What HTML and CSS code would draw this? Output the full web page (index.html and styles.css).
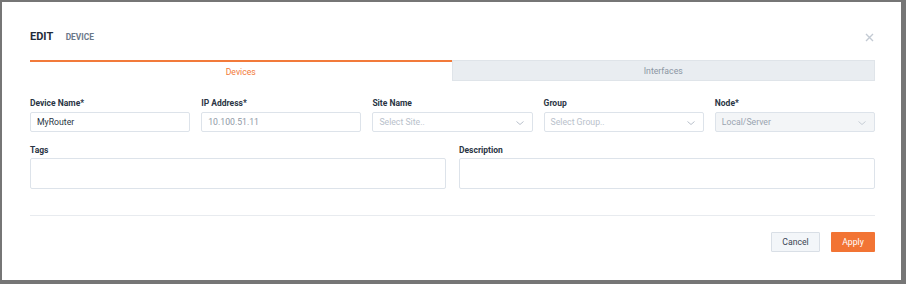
FILE: index.html
```html
<!DOCTYPE html>
<html lang="en">
<head>
<meta charset="UTF-8">
<meta name="viewport" content="width=device-width, initial-scale=1.0">
<title>Edit Device</title>
<link rel="stylesheet" href="styles.css">
</head>
<body>

<div class="modal">

<!-- Header -->
<div class="modal-header">
<div class="modal-title">EDIT <span class="modal-subtitle">DEVICE</span></div>
<div class="modal-close">
<svg width="9" height="9" viewBox="0 0 9 9"><path d="M1 1 L8 8 M8 1 L1 8" stroke="#c3cad3" stroke-width="1.4" fill="none"/></svg>
</div>
</div>

<!-- Tabs -->
<div class="tabs">
<div class="tab active">Devices</div>
<div class="tab">Interfaces</div>
</div>

<!-- Fields -->
<div class="field-row five">
<div class="field">
<label>Device Name*</label>
<div class="input">MyRouter</div>
</div>
<div class="field">
<label>IP Address*</label>
<div class="input readonly">10.100.51.11</div>
</div>
<div class="field">
<label>Site Name</label>
<div class="input select placeholder">Select Site..
<svg class="chevron" width="8" height="4" viewBox="0 0 8 4"><path d="M0.5 0.5 L4 3.5 L7.5 0.5" stroke="#b9c1cb" stroke-width="1" fill="none"/></svg>
</div>
</div>
<div class="field">
<label>Group</label>
<div class="input select placeholder">Select Group..
<svg class="chevron" width="8" height="4" viewBox="0 0 8 4"><path d="M0.5 0.5 L4 3.5 L7.5 0.5" stroke="#b9c1cb" stroke-width="1" fill="none"/></svg>
</div>
</div>
<div class="field">
<label>Node*</label>
<div class="input select disabled">Local/Server
<svg class="chevron" width="8" height="4" viewBox="0 0 8 4"><path d="M0.5 0.5 L4 3.5 L7.5 0.5" stroke="#c6cdd5" stroke-width="1" fill="none"/></svg>
</div>
</div>
</div>

<div class="field-row two">
<div class="field">
<label>Tags</label>
<div class="input tall"></div>
</div>
<div class="field">
<label>Description</label>
<div class="input tall"></div>
</div>
</div>

<div class="divider"></div>

<!-- Footer -->
<div class="modal-footer">
<button class="btn btn-cancel">Cancel</button>
<button class="btn btn-apply">Apply</button>
</div>

</div>

</body>
</html>
```

FILE: styles.css
```css
* {
margin: 0;
padding: 0;
box-sizing: border-box;
font-family: Roboto, "Liberation Sans", Arial, sans-serif;
}

body {
background-color: #767676;
width: 906px;
height: 284px;
padding: 2px 5px 4px 2px;
overflow: hidden;
}

.modal {
background: #fff;
height: 278px;
padding: 0 26px 0 28px;
}

/* Header */
.modal-header {
height: 58px;
padding-top: 26px;
display: flex;
justify-content: space-between;
}

.modal-title {
font-size: 11px;
font-weight: bold;
line-height: 18px;
color: #1f2b3a;
}

.modal-subtitle {
font-size: 8.4px;
color: #6b7889;
margin-left: 10px;
}

.modal-close {
height: 18px;
display: flex;
align-items: center;
margin-right: 1px;
}

/* Tabs */
.tabs {
display: flex;
height: 21px;
}

.tab {
flex: 1;
display: flex;
align-items: center;
justify-content: center;
font-size: 8.7px;
color: #8b96a3;
background: #e9edf1;
border: 1px solid #dfe4e9;
}

.tab.active {
background: #fff;
color: #f27a3a;
border: none;
border-top: 2px solid #f27a3a;
}

/* Fields */
.field-row {
display: grid;
margin-top: 16px;
}

.field-row.five {
grid-template-columns: repeat(5, 1fr);
gap: 11px;
}

.field-row.two {
grid-template-columns: 1fr 1fr;
gap: 13px;
margin-top: 12px;
}

.field label {
display: block;
font-size: 8.5px;
font-weight: bold;
line-height: 12px;
color: #2a3544;
margin-bottom: 3px;
}

.field-row.two label {
margin-bottom: 2px;
}

.input {
height: 20px;
border: 1px solid #dde3ea;
border-radius: 2px;
font-size: 8.7px;
color: #2a3544;
padding: 0 6px;
display: flex;
align-items: center;
position: relative;
}

.input.readonly {
color: #8f99a5;
}

.input.placeholder {
color: #b9c1cb;
}

.input.disabled {
background: #f3f5f7;
color: #9aa4b0;
}

.input.tall {
height: 31px;
}

.chevron {
position: absolute;
right: 8px;
top: 8px;
}

.divider {
height: 1px;
background: #e8ebef;
margin-top: 26px;
}

/* Footer */
.modal-footer {
display: flex;
justify-content: flex-end;
gap: 11px;
margin-top: 16px;
}

.btn {
height: 20px;
font-size: 8.7px;
border-radius: 1px;
cursor: pointer;
}

.btn-cancel {
width: 49px;
background: #f3f6f9;
border: 1px solid #d9dfe6;
color: #3a4554;
}

.btn-apply {
width: 44px;
background: #f27434;
border: none;
color: #fff;
}
```
